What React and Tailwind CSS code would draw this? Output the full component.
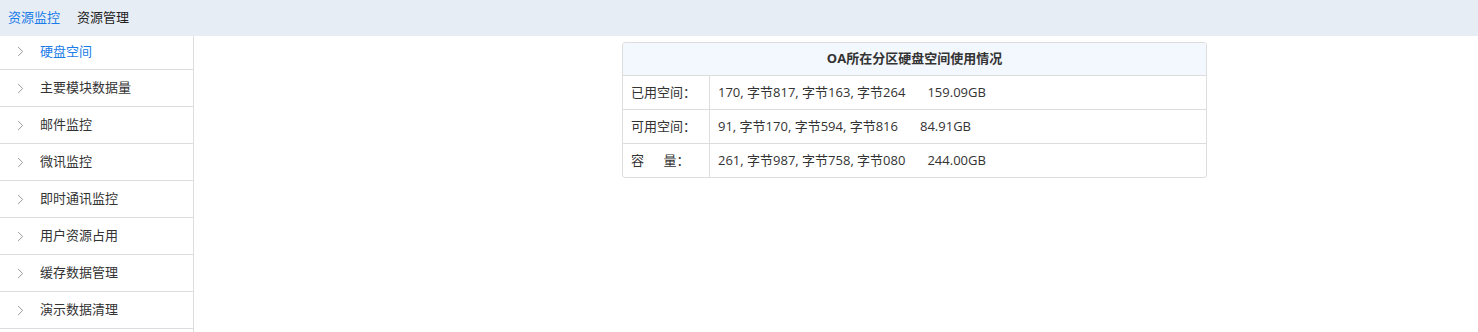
import { ChevronRight } from "lucide-react";

const menu = [
  "硬盘空间",
  "主要模块数据量",
  "邮件监控",
  "微讯监控",
  "即时通讯监控",
  "用户资源占用",
  "缓存数据管理",
  "演示数据清理",
];

const rows = [
  { label: "已用空间：", parts: "170, 字节817, 字节163, 字节264", size: "159.09GB" },
  { label: "可用空间：", parts: "91, 字节170, 字节594, 字节816", size: "84.91GB" },
  { label: "容\u2003\u2002量：", parts: "261, 字节987, 字节758, 字节080", size: "244.00GB" },
];

const App = () => {
  return (
    <div
      className="h-[332px] w-full bg-white text-[13px] text-[#333] overflow-hidden"
      style={{ fontFamily: '"Open Sans", "Noto Sans CJK SC", sans-serif' }}
    >
      <div className="h-[36px] bg-[#e7edf5] flex items-center pl-[8px] gap-[17px]">
        <span className="text-[#1a7ce8]">资源监控</span>
        <span className="text-[#222]">资源管理</span>
      </div>

      <div className="flex">
        <div className="w-[194px] h-[296px] border-r border-[#ddd] shrink-0">
          {menu.map((item, index) => (
            <div
              key={index}
              className={`flex items-center border-b border-[#ddd] ${
                index === 0 ? "h-[34px] pb-[2px]" : "h-[37px]"
              }`}
            >
              <ChevronRight
                size={17}
                strokeWidth={1.4}
                className="ml-[12px] text-[#9a9a9a]"
              />
              <span
                className={`ml-[11px] ${index === 0 ? "text-[#1a7ce8]" : "text-[#333]"}`}
              >
                {item}
              </span>
            </div>
          ))}
        </div>

        <div className="flex-1 pt-[6px] pl-[428px]">
          <div className="w-[585px] border border-[#ddd] rounded-[3px] overflow-hidden">
            <div className="h-[33px] bg-[#f3f8fe] flex items-center justify-center font-bold text-[#333] border-b border-[#ddd]">
              OA所在分区硬盘空间使用情况
            </div>
            {rows.map((row, index) => (
              <div
                key={index}
                className={`flex ${index < rows.length - 1 ? "h-[34px] border-b border-[#ddd]" : "h-[33px]"}`}
              >
                <div className="w-[87px] border-r border-[#ddd] flex items-center pl-[8px] whitespace-pre">
                  {row.label}
                </div>
                <div className="flex items-center pl-[8px]">
                  <span>{row.parts}</span>
                  <span className="ml-[22px]">{row.size}</span>
                </div>
              </div>
            ))}
          </div>
        </div>
      </div>
    </div>
  );
};

export default App;
